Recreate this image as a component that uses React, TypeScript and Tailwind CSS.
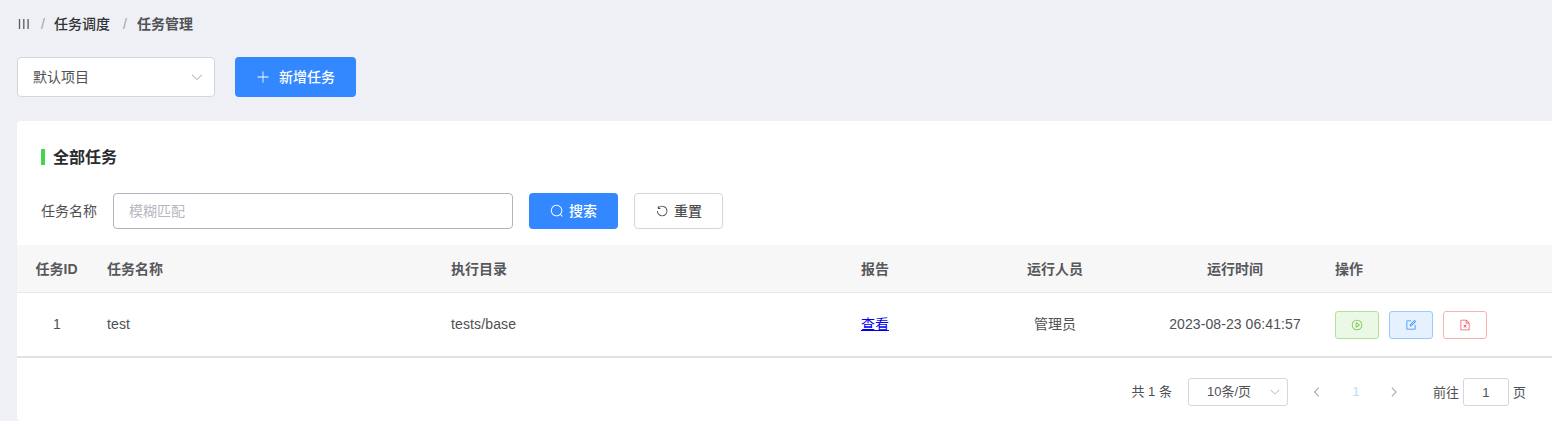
import type { ReactNode } from "react";

type IconProps = { className?: string };

function Icon({ className, children }: { className?: string; children: ReactNode }) {
  return (
    <svg viewBox="0 0 1024 1024" fill="currentColor" className={className}>
      {children}
    </svg>
  );
}

function ArrowDown({ className }: IconProps) {
  return (
    <Icon className={className}>
      <path d="M831.872 340.864 512 652.672 192.128 340.864a30.592 30.592 0 0 0-42.752 0 29.12 29.12 0 0 0 0 41.6L489.664 714.24a32 32 0 0 0 44.672 0l340.288-331.712a29.12 29.12 0 0 0 0-41.728 30.592 30.592 0 0 0-42.752 0z" />
    </Icon>
  );
}

function PlusIcon({ className }: IconProps) {
  return (
    <Icon className={className}>
      <path d="M480 480V128a32 32 0 0 1 64 0v352h352a32 32 0 1 1 0 64H544v352a32 32 0 1 1-64 0V544H128a32 32 0 0 1 0-64h352z" />
    </Icon>
  );
}

function SearchIcon({ className }: IconProps) {
  return (
    <Icon className={className}>
      <path d="m795.904 750.72 124.992 124.928a32 32 0 0 1-45.248 45.248L750.656 795.904a416 416 0 1 1 45.248-45.248zM480 832a352 352 0 1 0 0-704 352 352 0 0 0 0 704z" />
    </Icon>
  );
}

function RefreshLeftIcon({ className }: IconProps) {
  return (
    <Icon className={className}>
      <path d="M289.088 296.704h92.992a32 32 0 0 1 0 64H232.96a32 32 0 0 1-32-32V179.712a32 32 0 0 1 64 0v50.56a384 384 0 0 1 643.84 282.88 384 384 0 0 1-383.936 384 384 384 0 0 1-384-384h64a320 320 0 1 0 640 0 320 320 0 0 0-555.712-216.448z" />
    </Icon>
  );
}

function PlayIcon({ className }: IconProps) {
  return (
    <Icon className={className}>
      <path d="M512 64a448 448 0 1 1 0 896 448 448 0 0 1 0-896zm0 832a384 384 0 0 0 0-768 384 384 0 0 0 0 768zm-48-247.616L668.608 512 464 375.616v272.768zm10.624-342.656 249.472 166.336a48 48 0 0 1 0 79.872L474.624 718.272A48 48 0 0 1 400 678.336V345.6a48 48 0 0 1 74.624-39.936z" />
    </Icon>
  );
}

function EditIcon({ className }: IconProps) {
  return (
    <Icon className={className}>
      <path d="M832 512a32 32 0 1 1 64 0v352a32 32 0 0 1-32 32H160a32 32 0 0 1-32-32V160a32 32 0 0 1 32-32h352a32 32 0 0 1 0 64H192v640h640V512z" />
      <path d="m469.952 554.24 52.8-7.552L847.104 222.4a32 32 0 1 0-45.248-45.248L477.44 501.44l-7.552 52.8zm422.4-422.4a96 96 0 0 1 0 135.808l-331.84 331.84a32 32 0 0 1-18.112 9.088L436.8 623.68a32 32 0 0 1-36.224-36.224l15.104-105.6a32 32 0 0 1 9.024-18.112l331.904-331.84a96 96 0 0 1 135.744 0z" />
    </Icon>
  );
}

function DocumentDeleteIcon({ className }: IconProps) {
  return (
    <Icon className={className}>
      <path d="M805.504 320 640 154.496V320h165.504zM832 384H576V128H192v768h640V384zM160 64h480l256 256v608a32 32 0 0 1-32 32H160a32 32 0 0 1-32-32V96a32 32 0 0 1 32-32zm308.992 546.304-90.496-90.624 45.248-45.248 90.56 90.496 90.496-90.432 45.248 45.248-90.496 90.56 90.496 90.496-45.248 45.248-90.496-90.496-90.56 90.496-45.248-45.248 90.496-90.496z" />
    </Icon>
  );
}

function Chevron({ className, flip }: IconProps & { flip?: boolean }) {
  return (
    <Icon className={className}>
      {flip ? (
        <path d="M340.864 149.312a30.592 30.592 0 0 0 0 42.752L652.736 512 340.864 831.872a30.592 30.592 0 0 0 0 42.752 29.12 29.12 0 0 0 41.728 0L714.24 534.336a32 32 0 0 0 0-44.672L382.592 149.376a29.12 29.12 0 0 0-41.728 0z" stroke="currentColor" strokeWidth="40" />
      ) : (
        <path d="M609.408 149.376 277.76 489.6a32 32 0 0 0 0 44.672l331.648 340.352a29.12 29.12 0 0 0 41.728 0 30.592 30.592 0 0 0 0-42.752L339.264 511.936l311.872-319.872a30.592 30.592 0 0 0 0-42.688 29.12 29.12 0 0 0-41.728 0z" stroke="currentColor" strokeWidth="40" />
      )}
    </Icon>
  );
}

function Breadcrumb() {
  return (
    <nav className="flex h-12 items-center text-[#303133]">
      <svg viewBox="0 0 12 10" className="ml-px h-2.5 w-3" stroke="#5a5c60" strokeWidth="1.3">
        <path d="M1.5 0v10M5.8 0v10M10.1 0v10" />
      </svg>
      <span className="ml-[11px] w-[13px] text-[#a0a3ab]">/</span>
      <span className="font-medium">任务调度</span>
      <span className="ml-[13px] w-[14px] text-[#a0a3ab]">/</span>
      <span className="font-bold text-[#505256]">任务管理</span>
    </nav>
  );
}

const columns = "grid h-full grid-cols-[80px_344px_344px_180px_180px_180px_1fr] items-center";

export default function App() {
  return (
    <div className="flex h-[421px] w-full flex-col overflow-hidden bg-[#eff0f5] pl-[17px] font-['Liberation_Sans','Noto_Sans_CJK_SC',sans-serif] text-sm leading-5 text-[#4f5054]">
      <Breadcrumb />

      <div className="mt-[9px] flex h-10 gap-5">
        <div className="flex w-[198px] items-center justify-between rounded border border-[#d4d6de] bg-white pr-[10px] pl-[15px]">
          <span>默认项目</span>
          <ArrowDown className="size-[14px] text-[#a8abb2]" />
        </div>
        <button className="flex w-[121px] items-center rounded bg-[#3388ff] pl-[21px] font-medium text-white">
          <PlusIcon className="size-[14px]" />
          <span className="ml-[9px]">新增任务</span>
        </button>
      </div>

      <main className="mt-6 flex h-[300px] flex-col rounded-l bg-white">
        <div className="mt-6 flex h-6 items-center px-6">
          <span className="h-4 w-1 bg-[#43d64b]" />
          <h1 className="ml-2 pt-0.5 text-base font-bold text-[#2a2b2e]">全部任务</h1>
        </div>

        <form className="mt-6 flex h-9 items-center px-6" onSubmit={(e) => e.preventDefault()}>
          <label htmlFor="task-name">任务名称</label>
          <input
            id="task-name"
            placeholder="模糊匹配"
            className="ml-4 h-9 w-[400px] rounded border border-[#b1b3bf] px-[15px] placeholder:text-[#b5b8c0]"
          />
          <button className="ml-4 flex h-9 w-[89px] items-center rounded bg-[#3388ff] pl-[21px] font-medium text-white">
            <SearchIcon className="size-[14px]" />
            <span className="ml-[5px]">搜索</span>
          </button>
          <button className="ml-4 flex h-9 w-[89px] items-center rounded border border-[#d5d6df] pl-[20px] font-medium">
            <RefreshLeftIcon className="size-[14px]" />
            <span className="ml-[5px]">重置</span>
          </button>
        </form>

        <section className="mt-4">
          <div className="h-12 border-b border-[#e5e6f0] bg-[#f7f7f7] font-bold text-[#57585c]">
            <div className={columns}>
              <span className="pr-px text-center">任务ID</span>
              <span className="pl-[10px]">任务名称</span>
              <span className="pl-[10px]">执行目录</span>
              <span className="text-center">报告</span>
              <span className="text-center">运行人员</span>
              <span className="text-center">运行时间</span>
              <span className="pl-[10px]">操作</span>
            </div>
          </div>
          <div className="h-[65px] border-b-2 border-[#e0e1e9]">
            <div className={columns}>
              <span className="pb-0.5 text-center">1</span>
              <span className="pb-0.5 pl-[10px] tracking-[0.13px]">test</span>
              <span className="pb-0.5 pl-[10px] tracking-[0.13px]">tests/base</span>
              <a href="#report" className="pb-0.5 text-center text-[#0000ee] underline">查看</a>
              <span className="pb-0.5 text-center">管理员</span>
              <span className="pb-0.5 text-center tracking-[0.08px]">2023-08-23 06:41:57</span>
              <div className="flex gap-[10px] pl-[10px]">
                <button aria-label="运行" className="flex h-7 w-11 items-center justify-center rounded-[3px] border border-[#b3e19d] bg-[#ecf8e6] text-[#67c23a]">
                  <PlayIcon className="size-3" />
                </button>
                <button aria-label="编辑" className="flex h-7 w-11 items-center justify-center rounded-[3px] border border-[#99c9ff] bg-[#e5f1ff] text-[#3388ff]">
                  <EditIcon className="size-3" />
                </button>
                <button aria-label="删除" className="flex h-7 w-11 items-center justify-center rounded-[3px] border border-[#f9b0b4] bg-white text-[#f05660]">
                  <DocumentDeleteIcon className="size-3" />
                </button>
              </div>
            </div>
          </div>
        </section>

        <footer className="mt-5 flex h-7 items-center justify-end pr-[26px] text-[13px]">
          <span>共 1 条</span>
          <div className="ml-4 flex h-7 w-[100px] items-center justify-between rounded-[3px] border border-[#d5d6df] pr-[6px] pl-[18px]">
            <span>10条/页</span>
            <ArrowDown className="size-3 text-[#a8abb2]" />
          </div>
          <Chevron className="ml-[23px] size-3 text-[#a0a3ab]" />
          <span className="ml-[27px] w-3 text-center text-[#b8dcff]">1</span>
          <Chevron flip className="ml-[26px] size-3 text-[#a0a3ab]" />
          <span className="ml-[33px] pt-px">前往</span>
          <span className="ml-1 flex h-7 w-[46px] items-center justify-center rounded-[3px] border border-[#d5d6df] pt-px">1</span>
          <span className="ml-[4px] pt-px">页</span>
        </footer>
      </main>
    </div>
  );
}
